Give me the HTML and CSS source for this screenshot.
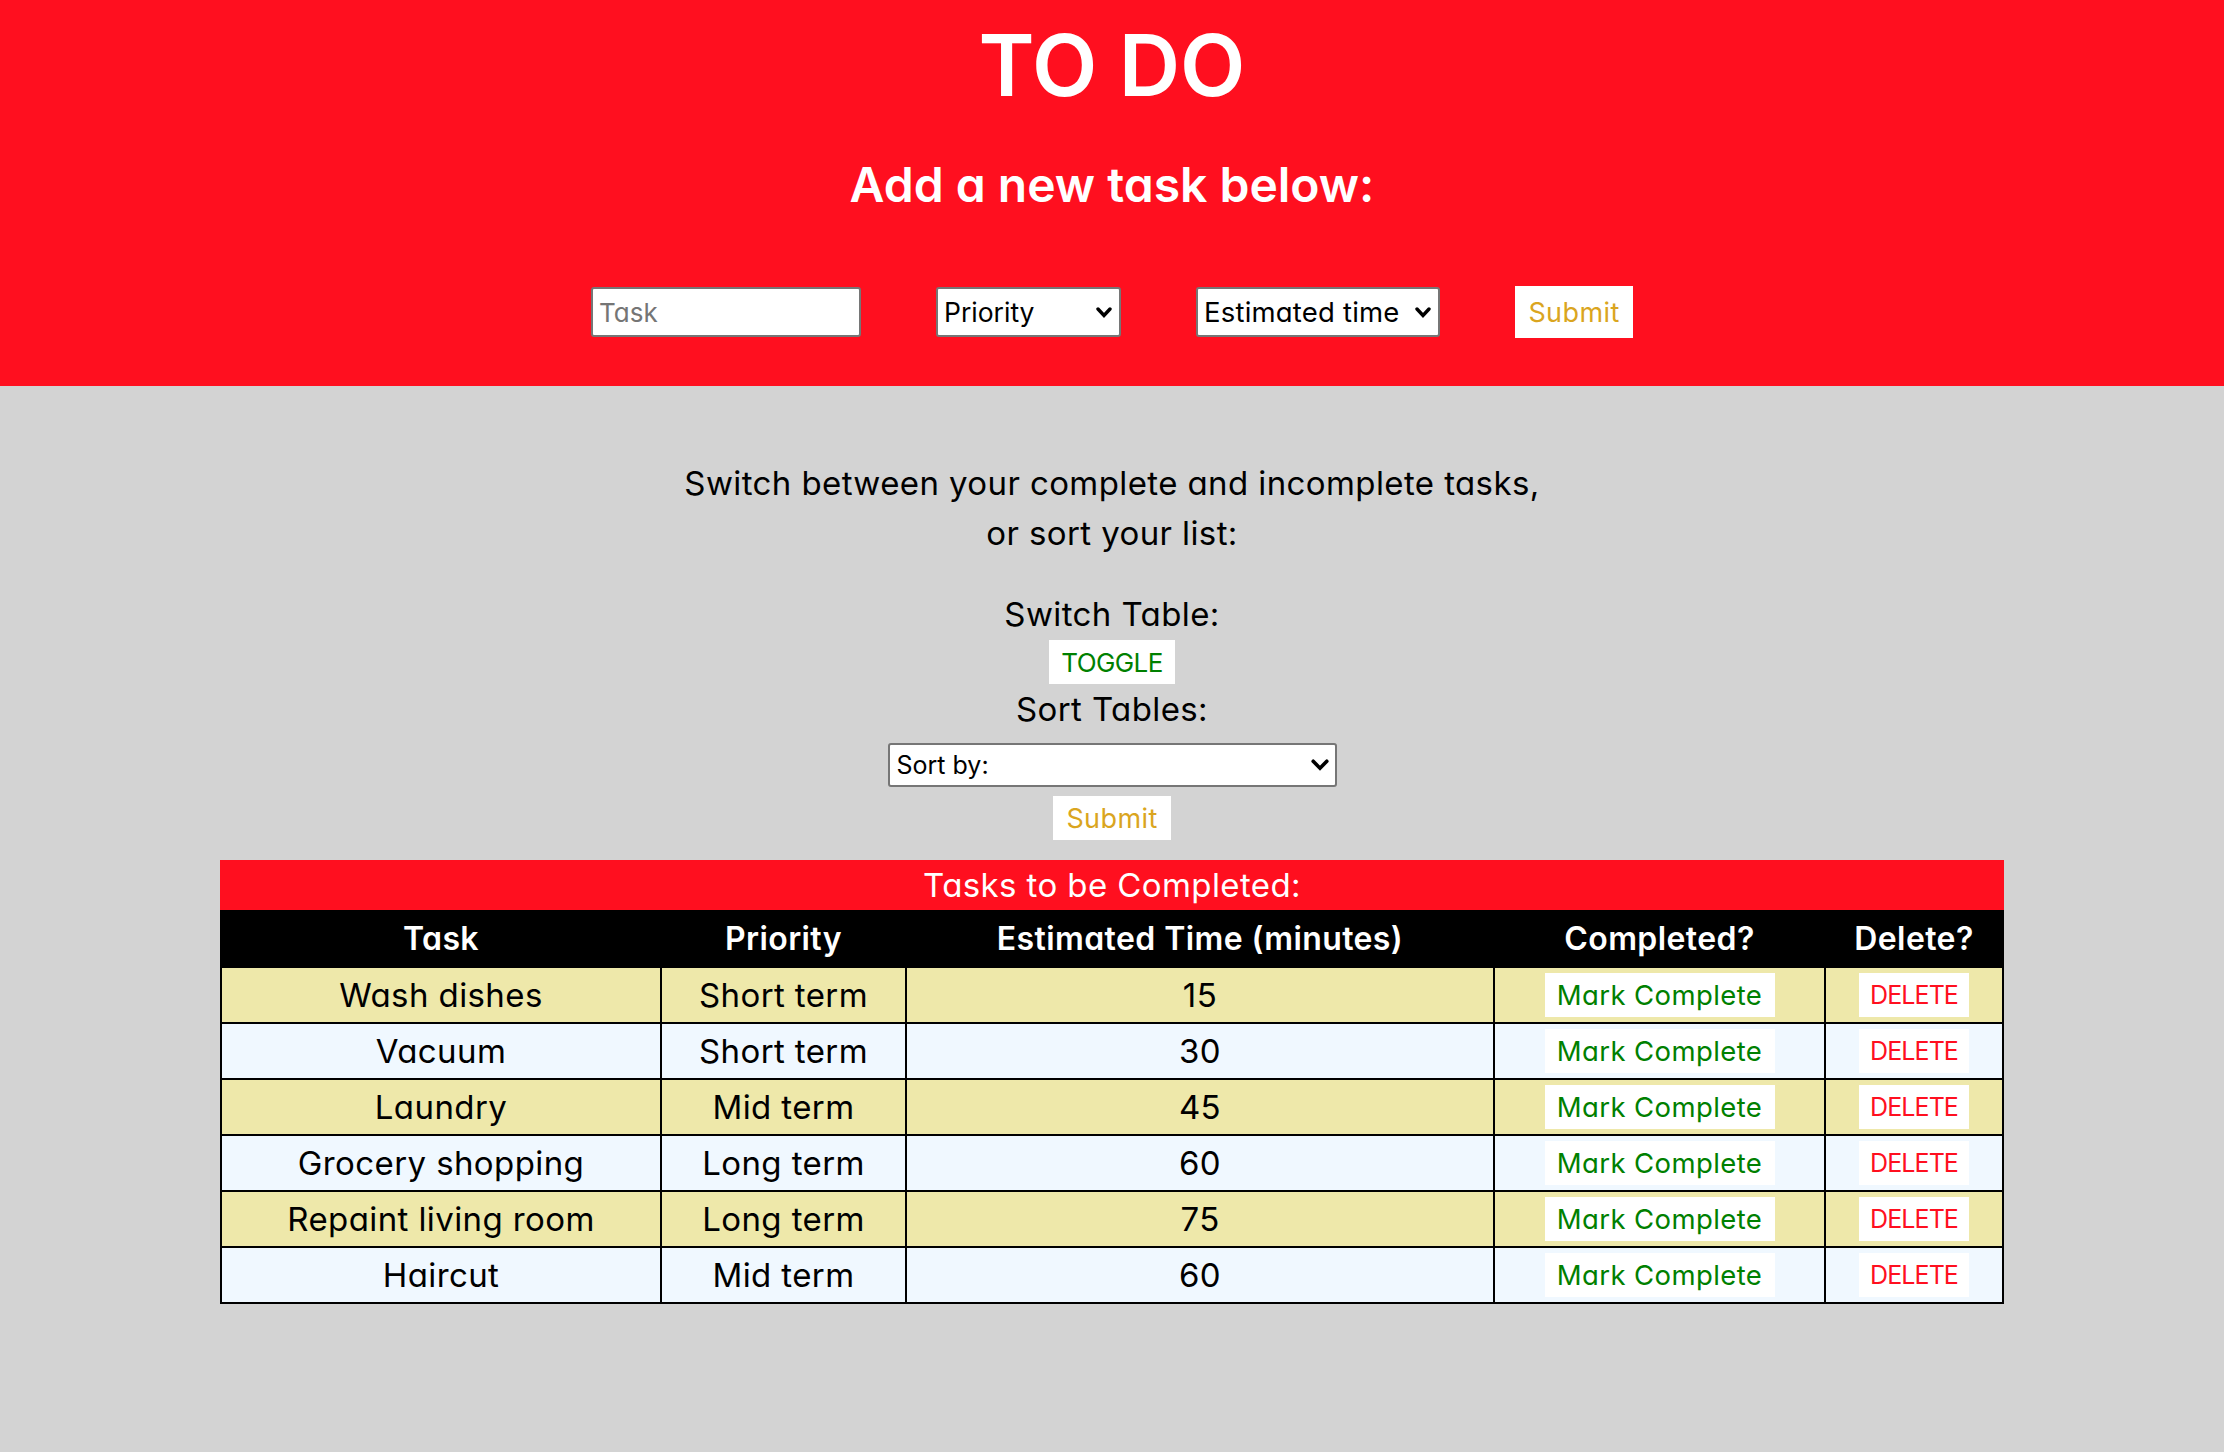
FILE: index.html
```html
<!DOCTYPE html>
<html lang="en">
<head>
<meta charset="utf-8">
<title>TO DO</title>
<link rel="stylesheet" href="styles.css">
</head>
<body>
<header class="top">
  <h1 class="title">TO DO</h1>
  <h2 class="subtitle">Add a new task below:</h2>
  <form class="add-form">
    <input class="field task-input" type="text" placeholder="Task">
    <span class="select-wrap">
      <select class="field priority-select">
        <option>Priority</option>
        <option>Short term</option>
        <option>Mid term</option>
        <option>Long term</option>
      </select>
      <svg class="chevron" viewBox="0 0 16 11" width="16" height="11" aria-hidden="true"><polyline points="2,2 8,8.5 14,2" fill="none" stroke="#000" stroke-width="3.4" stroke-linecap="round" stroke-linejoin="miter"/></svg>
    </span>
    <span class="select-wrap">
      <select class="field time-select">
        <option>Estimated time</option>
        <option>15</option>
        <option>30</option>
        <option>45</option>
        <option>60</option>
        <option>75</option>
      </select>
      <svg class="chevron" viewBox="0 0 16 11" width="16" height="11" aria-hidden="true"><polyline points="2,2 8,8.5 14,2" fill="none" stroke="#000" stroke-width="3.4" stroke-linecap="round" stroke-linejoin="miter"/></svg>
    </span>
    <button class="btn btn-submit btn-submit-lg" type="button">Submit</button>
  </form>
</header>
<main class="controls">
  <p class="intro">Switch between your complete and incomplete tasks,<br>or sort your list:</p>
  <div class="label label-switch">Switch Table:</div>
  <button class="btn btn-toggle" type="button">TOGGLE</button>
  <div class="label label-sort">Sort Tables:</div>
  <span class="select-wrap sort-wrap">
    <select class="field sort-select">
      <option>Sort by:</option>
      <option>Priority</option>
      <option>Estimated time</option>
    </select>
    <svg class="chevron chevron-lg" viewBox="0 0 18 12" width="18" height="12" aria-hidden="true"><polyline points="2.2,2.2 9,9.2 15.8,2.2" fill="none" stroke="#000" stroke-width="3.6" stroke-linecap="round" stroke-linejoin="miter"/></svg>
  </span>
  <button class="btn btn-submit btn-submit-sm" type="button">Submit</button>

  <table class="tasks">
    <caption class="tasks-caption">Tasks to be Completed:</caption>
    <thead>
      <tr>
        <th class="c-task">Task</th>
        <th class="c-prio">Priority</th>
        <th class="c-time">Estimated Time (minutes)</th>
        <th class="c-done">Completed?</th>
        <th class="c-del">Delete?</th>
      </tr>
    </thead>
    <tbody>
      <tr class="odd">
        <td>Wash dishes</td><td>Short term</td><td>15</td>
        <td><button class="btn btn-complete" type="button">Mark Complete</button></td>
        <td><button class="btn btn-delete" type="button">DELETE</button></td>
      </tr>
      <tr class="even">
        <td>Vacuum</td><td>Short term</td><td>30</td>
        <td><button class="btn btn-complete" type="button">Mark Complete</button></td>
        <td><button class="btn btn-delete" type="button">DELETE</button></td>
      </tr>
      <tr class="odd">
        <td>Laundry</td><td>Mid term</td><td>45</td>
        <td><button class="btn btn-complete" type="button">Mark Complete</button></td>
        <td><button class="btn btn-delete" type="button">DELETE</button></td>
      </tr>
      <tr class="even">
        <td>Grocery shopping</td><td>Long term</td><td>60</td>
        <td><button class="btn btn-complete" type="button">Mark Complete</button></td>
        <td><button class="btn btn-delete" type="button">DELETE</button></td>
      </tr>
      <tr class="odd">
        <td>Repaint living room</td><td>Long term</td><td>75</td>
        <td><button class="btn btn-complete" type="button">Mark Complete</button></td>
        <td><button class="btn btn-delete" type="button">DELETE</button></td>
      </tr>
      <tr class="even">
        <td>Haircut</td><td>Mid term</td><td>60</td>
        <td><button class="btn btn-complete" type="button">Mark Complete</button></td>
        <td><button class="btn btn-delete" type="button">DELETE</button></td>
      </tr>
    </tbody>
  </table>
</main>
</body>
</html>
```
FILE: styles.css
```css
html, body {
  margin: 0;
  padding: 0;
}
body {
  background: #d3d3d3;
  font-family: Inter, "Noto Sans", sans-serif;
  font-feature-settings: "cv11" 1;
  color: #000;
  min-height: 1452px;
}

/* ---------- header ---------- */
.top {
  background: #ff0f1f;
  color: #fff;
  height: 386px;
  box-sizing: border-box;
  padding-top: 16px;
  display: flex;
  flex-direction: column;
  align-items: center;
}
.title {
  margin: 0;
  font-size: 85px;
  line-height: 100px;
  font-weight: 600;
}
.subtitle {
  margin: 38.5px 0 0;
  font-size: 48px;
  line-height: 60px;
  font-weight: 600;
}
.add-form {
  margin-top: 71.5px;
  display: flex;
  align-items: center;
  gap: 75px;
  height: 52px;
}

/* ---------- form fields ---------- */
.field {
  box-sizing: border-box;
  background: #fff;
  border: 2px solid #767676;
  border-radius: 3px;
  font-family: inherit;
  font-feature-settings: "cv11" 1;
  color: #000;
  margin: 0;
}
select.field {
  appearance: none;
  -webkit-appearance: none;
  display: block;
  outline: none;
}
.select-wrap {
  position: relative;
  display: block;
}
.chevron {
  position: absolute;
  right: 9px;
  top: 50%;
  margin-top: -5px;
  pointer-events: none;
}
.chevron-lg {
  right: 8px;
  margin-top: -6px;
}
.task-input {
  width: 270px;
  height: 50px;
  padding: 0 6px;
  font-size: 26px;
  outline: none;
}
.task-input::placeholder {
  color: #757575;
}
.priority-select,
.time-select {
  height: 50px;
  font-size: 26.5px;
  padding: 0 30px 0 6px;
}
.priority-select { width: 185px; }
.time-select {
  width: 244px;
  padding-right: 24px;
  font-size: 27.5px;
  letter-spacing: 0.2px;
}
.sort-wrap {
  margin-top: 9px;
}
.sort-select {
  width: 449px;
  height: 44px;
  font-size: 25px;
  padding: 0 32px 0 7px;
}

/* ---------- buttons ---------- */
.btn {
  box-sizing: border-box;
  background: #fff;
  border: none;
  border-radius: 0;
  padding: 0;
  margin: 0;
  font-family: inherit;
  font-feature-settings: "cv11" 1;
  font-size: 27px;
  letter-spacing: 0.4px;
  cursor: pointer;
}
.btn-submit {
  color: #daa520;
  width: 118px;
}
.btn-submit-lg { height: 52px; }
.btn-submit-sm {
  height: 44px;
  margin-top: 9px;
}
.btn-toggle {
  color: #008000;
  width: 126px;
  height: 44px;
  margin-top: 1px;
  font-size: 26px;
  letter-spacing: -0.6px;
}
.btn-complete {
  color: #008000;
  width: 230px;
  height: 44px;
  display: block;
  margin: 0 auto;
  font-size: 27.5px;
}
.btn-delete {
  color: #ff0f1f;
  width: 110px;
  height: 44px;
  display: block;
  margin: 0 auto;
  font-size: 25px;
  letter-spacing: -0.9px;
}

/* ---------- controls ---------- */
.controls {
  display: flex;
  flex-direction: column;
  align-items: center;
  font-size: 33px;
  letter-spacing: 0.4px;
}
.intro {
  margin: 71.5px 0 0;
  line-height: 50px;
  text-align: center;
}
.label {
  line-height: 50px;
}
.label-switch { margin-top: 31.5px; }
.label-sort { margin-top: 0; }

/* ---------- table ---------- */
.tasks {
  margin-top: 20px;
  width: 1784px;
  table-layout: fixed;
  border-collapse: separate;
  border-spacing: 0;
  font-size: 33px;
  letter-spacing: 0.4px;
}
.tasks-caption {
  background: #ff0f1f;
  color: #fff;
  height: 50px;
  line-height: 50px;
  text-align: center;
}
.tasks th,
.tasks td {
  box-sizing: border-box;
  border-right: 2px solid #000;
  border-bottom: 2px solid #000;
  text-align: center;
  vertical-align: middle;
}
.tasks th:first-child,
.tasks td:first-child {
  border-left: 2px solid #000;
}
.tasks th {
  background: #000;
  color: #fff;
  font-weight: 600;
  font-size: 32px;
  height: 58px;
  padding: 0;
}
.tasks td {
  height: 56px;
  padding: 5px 0;
  line-height: 44px;
}
.c-task { width: 442px; }
.c-prio { width: 245px; }
.c-time { width: 588px; }
.c-done { width: 331px; }
.c-del { width: 178px; }
.odd td { background: #eee8aa; }
.even td { background: #f0f8ff; }
```
